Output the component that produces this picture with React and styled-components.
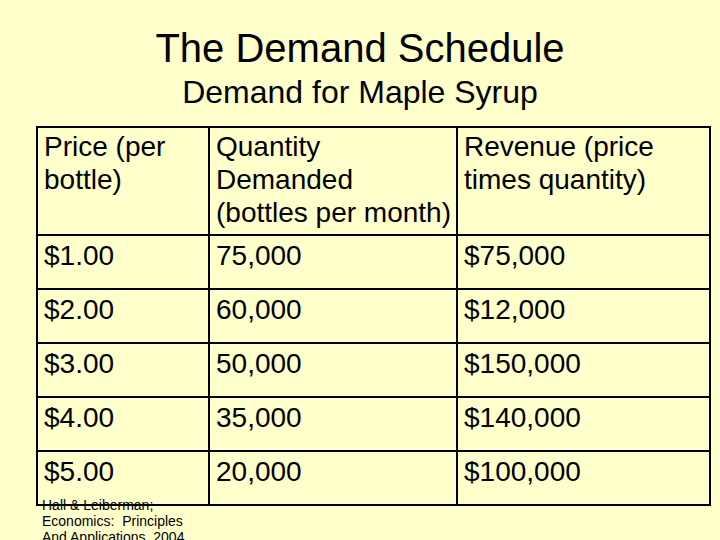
import styled, { createGlobalStyle } from 'styled-components'

const GlobalStyle = createGlobalStyle`
    html, body {
        margin: 0;
        padding: 0;
        background: #FFFFCC;
    }
    body {
        font-family: "Liberation Sans", Arial, sans-serif;
        color: #000;
    }
`

const Slide = styled.div`
    width: 720px;
    height: 540px;
    overflow: hidden;
    background: #FFFFCC;
    padding-top: 25px;
    box-sizing: border-box;
`

const Title = styled.h1`
    margin: 0;
    font-size: 40px;
    line-height: 46px;
    font-weight: normal;
    text-align: center;
`

const Subtitle = styled.h2`
    margin: 2px 0 0;
    font-size: 32px;
    line-height: 38px;
    font-weight: normal;
    text-align: center;
`

const Table = styled.div`
    margin: 15px 0 0 36px;
    width: 675px;
    box-sizing: border-box;
    display: grid;
    grid-template-columns: 170px 246px 1fr;
    grid-template-rows: 106px repeat(5, 52px);
    gap: 2px;
    padding: 2px;
    background: #000;
`

const Cell = styled.div`
    background: #FFFFCC;
    padding: ${p => (p.$head ? '2px 6px' : '3px 6px')};
    font-size: 28px;
    line-height: 33px;
    white-space: nowrap;
`

const Note = styled.p`
    margin: -9px 0 0 42px;
    font-size: 14px;
    line-height: 16px;
`

const rows = [
    ['$1.00', '75,000', '$75,000'],
    ['$2.00', '60,000', '$12,000'],
    ['$3.00', '50,000', '$150,000'],
    ['$4.00', '35,000', '$140,000'],
    ['$5.00', '20,000', '$100,000'],
]

export default function App() {
    return (
        <>
            <GlobalStyle />
            <Slide>
                <Title>The Demand Schedule</Title>
                <Subtitle>Demand for Maple Syrup</Subtitle>
                <Table>
                    <Cell $head>Price (per<br />bottle)</Cell>
                    <Cell $head>Quantity<br />Demanded<br />(bottles per month)</Cell>
                    <Cell $head>Revenue (price<br />times quantity)</Cell>
                    {rows.map(r => r.map((v, i) => <Cell key={r[0] + i}>{v}</Cell>))}
                </Table>
                <Note>
                    Hall &amp; Leiberman;<br />
                    Economics:&nbsp; Principles<br />
                    And Applications, 2004
                </Note>
            </Slide>
        </>
    )
}
